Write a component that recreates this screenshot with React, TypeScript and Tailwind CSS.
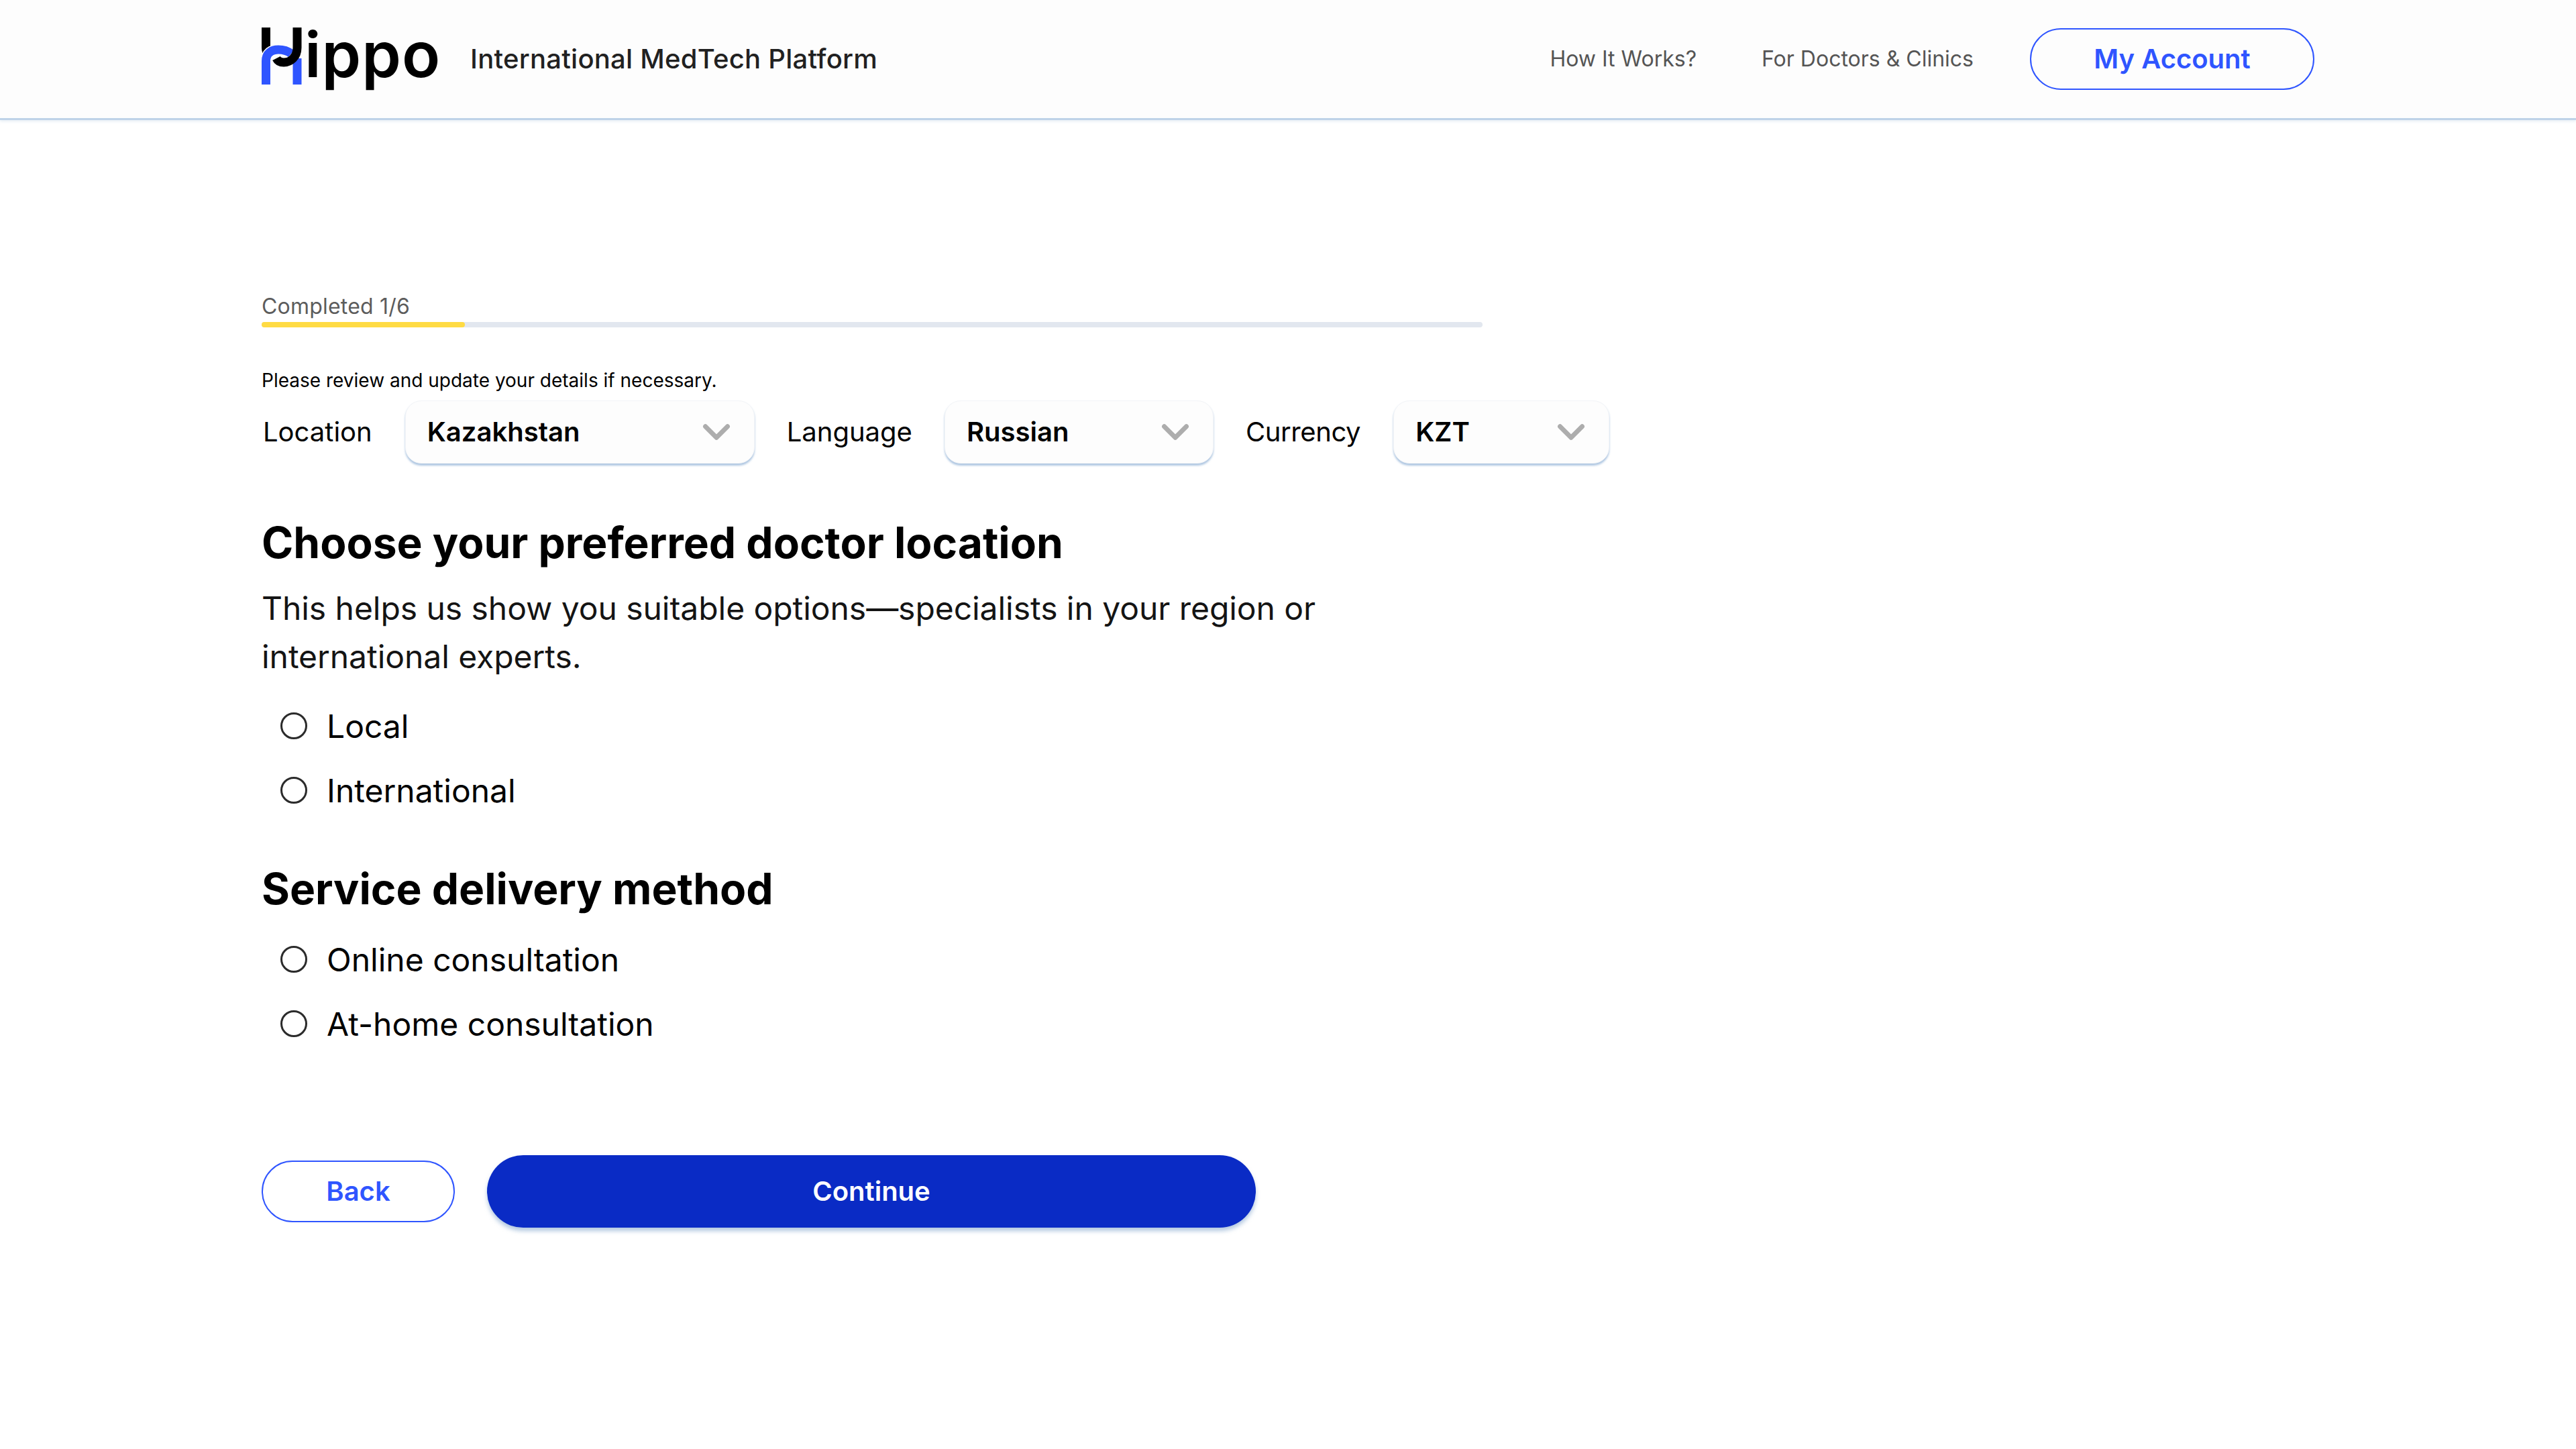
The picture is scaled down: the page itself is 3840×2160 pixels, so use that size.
import { ChevronDown } from "lucide-react";

const inter = "font-['Inter',sans-serif]";

function HippoLogo() {
  return (
    <div className="flex h-[96px] w-[264px] items-start">
      <svg width="60" height="86" viewBox="0 0 60 86" fill="none" className="mt-[1px] shrink-0">
        <path d="M6.5 0V30C6.5 34 7.5 37 10 40" stroke="#000" strokeWidth="13" />
        <path d="M53 46V85" stroke="#2f55ff" strokeWidth="13" />
        <path d="M6.5 85V50C6.5 38 15 33 25 33C33 33 39 35 44 39" stroke="#fff" strokeWidth="16" />
        <path d="M6.5 85V50C6.5 38 15 33 25 33C33 33 39 35 44 39" stroke="#2f55ff" strokeWidth="13" />
        <path d="M53 0V30C53 44 43 52 33 52C28 52 24 50 22 46" stroke="#000" strokeWidth="13" />
      </svg>
      <span className="ml-[4px] mt-[-9px] text-[94px] leading-[100px] font-semibold tracking-[1px] text-black">ippo</span>
    </div>
  );
}

function SelectBox({ value, width }: { value: string; width: string }) {
  return (
    <div className={`flex h-[94px] items-center justify-between rounded-[24px] border border-[#f2f4f7] bg-[#fdfdfd] pr-[23px] pl-[32px] shadow-[0_3px_3px_rgba(120,160,205,0.6)] ${width}`}>
      <span className="text-[40px] font-semibold text-black">{value}</span>
      <ChevronDown size={66} strokeWidth={2.5} className="text-[#adadad]" />
    </div>
  );
}

function RadioRow({ label }: { label: string }) {
  return (
    <label className="flex h-[96px] items-center pl-[28px]">
      <span className="mb-[2px] h-[40px] w-[40px] rounded-full border-[3px] border-[#2b2b2b]" />
      <span className="ml-[29px] text-[48px] text-black">{label}</span>
    </label>
  );
}

export default function App() {
  return (
    <div className={`min-h-[2160px] bg-white ${inter}`}>
      <header className="h-[179px] border-b-[3px] border-[#bfd3e8] bg-[#fdfdfd] shadow-[0_2px_4px_rgba(190,210,230,0.4)]">
        <div className="flex h-[176px] items-center pr-[390px] pl-[390px]">
          <HippoLogo />
          <p className="ml-[47px] text-[40px] font-medium tracking-[0.25px] text-[#212121]">International MedTech Platform</p>
          <nav className="ml-auto flex items-center">
            <a className="text-[32px] text-[#555]">How It Works?</a>
            <a className="ml-[97px] text-[32px] text-[#555]">For Doctors &amp; Clinics</a>
            <a className="ml-[84px] flex h-[92px] w-[424px] items-center justify-center rounded-full border-[2px] border-[#2f55ff] text-[40px] font-semibold text-[#2f55ff]">
              My Account
            </a>
          </nav>
        </div>
      </header>

      <main className="pt-[258px] pl-[390px]">
        <p className="text-[32px] leading-[40px] tracking-[0.2px] text-[#5c5c5c]">Completed 1/6</p>
        <div className="mt-[3px] h-[8px] w-[1820px] rounded-full bg-[#e2e7ef]">
          <div className="h-[8px] w-[303px] rounded-full bg-[#ffdb43]" />
        </div>

        <p className="mt-[62px] text-[28px] leading-[34px] text-black">Please review and update your details if necessary.</p>
        <div className="mt-[13px] flex items-center">
          <span className="ml-[2px] text-[40px] text-black">Location</span>
          <SelectBox value="Kazakhstan" width="ml-[49px] w-[521px]" />
          <span className="ml-[48px] text-[40px] text-black">Language</span>
          <SelectBox value="Russian" width="ml-[48px] w-[401px]" />
          <span className="ml-[48px] text-[40px] tracking-[-0.4px] text-black">Currency</span>
          <SelectBox value="KZT" width="ml-[49px] w-[322px]" />
        </div>

        <h2 className="mt-[80px] text-[64px] leading-[76px] font-bold text-black">Choose your preferred doctor location</h2>
        <p className="mt-[24px] w-[1640px] text-[48px] leading-[72px] tracking-[-0.05px] text-[#141414]">
          This helps us show you suitable options—specialists in your region or international experts.
        </p>
        <div className="mt-[20px]">
          <RadioRow label="Local" />
          <RadioRow label="International" />
        </div>

        <h2 className="mt-[60px] text-[64px] leading-[76px] font-bold text-black">Service delivery method</h2>
        <div className="mt-[20px]">
          <RadioRow label="Online consultation" />
          <RadioRow label="At-home consultation" />
        </div>

        <div className="mt-[147px] flex items-center">
          <button className="h-[92px] w-[288px] rounded-full border-[2px] border-[#2f55ff] bg-white text-[40px] font-semibold text-[#2f55ff]">
            Back
          </button>
          <button className="ml-[48px] h-[108px] w-[1146px] rounded-full bg-[#0a2bc5] text-[40px] font-semibold text-white shadow-[0_5px_6px_rgba(130,165,205,0.6)]">
            Continue
          </button>
        </div>
      </main>
    </div>
  );
}
